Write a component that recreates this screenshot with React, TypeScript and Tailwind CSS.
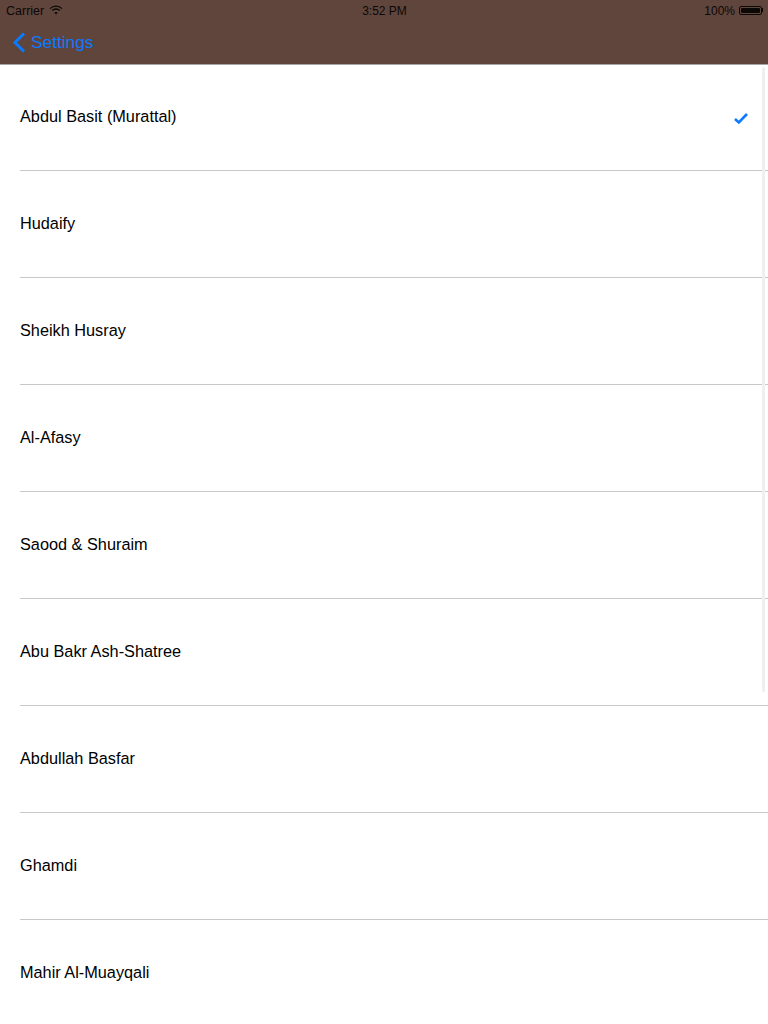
const names = [
  "Abdul Basit (Murattal)",
  "Hudaify",
  "Sheikh Husray",
  "Al-Afasy",
  "Saood & Shuraim",
  "Abu Bakr Ash-Shatree",
  "Abdullah Basfar",
  "Ghamdi",
  "Mahir Al-Muayqali",
];

export default function App() {
  return (
    <div className="relative h-[1024px] w-[768px] overflow-hidden bg-white font-['Liberation_Sans',Arial,sans-serif] text-black">
      <header className="h-[65px] border-b border-[#a9a5a3] bg-[#60453d]">
        <div className="flex h-[20px] items-center justify-between pt-[2px] pl-[6px] pr-[5px] text-[12px] text-[#0c0806]">
          <div className="flex w-[200px] items-center gap-[5px]">
            <span className="text-[12.5px]">Carrier</span>
            <svg width="14" height="10" viewBox="0 0 14 10" fill="none" stroke="#0c0806" className="-mt-[2px]">
              <path d="M1 3.6C4.4 .4 9.6 .4 13 3.6" strokeWidth="1.3" />
              <path d="M3.2 5.6C5.4 3.7 8.6 3.7 10.8 5.6" strokeWidth="1.3" />
              <path d="M7 9.6 5.2 7.6C6.2 6.8 7.8 6.8 8.8 7.6Z" fill="#0c0806" stroke="none" />
            </svg>
          </div>
          <span>3:52 PM</span>
          <div className="flex w-[200px] items-center justify-end gap-[4px]">
            <span>100%</span>
            <div className="-mt-[2px] flex items-center">
              <div className="h-[9px] w-[23px] rounded-[2px] border border-[#0c0806] p-px">
                <div className="h-full w-full rounded-[1px] bg-[#0c0806]" />
              </div>
              <div className="h-[4px] w-px bg-[#0c0806]" />
            </div>
          </div>
        </div>
        <div className="flex h-[44px] items-center pl-[12px] text-[17.3px] text-[#0a7aff]">
          <svg width="14" height="21" viewBox="0 0 14 21" fill="none" stroke="#0a7aff" strokeWidth="3">
            <path d="M12 1.5 3 10.5l9 9" />
          </svg>
          <span className="ml-[5px] mt-[2px]">Settings</span>
        </div>
      </header>
      <ul className="pl-[20px] text-[16.3px]">
        {names.map((n, i) => (
          <li
            key={n}
            className={`flex items-center justify-between border-b border-[#c8c7cc] ${i === 0 ? "h-[106px]" : "h-[107px]"}`}
          >
            <span className="mb-[2px]">{n}</span>
            {i === 0 && (
              <svg width="14" height="11" viewBox="0 0 14 11" fill="none" stroke="#0a7aff" strokeWidth="2.6" className="mr-[20px] mt-[1px]">
                <path d="M1 6 4.8 9.4 13 1" />
              </svg>
            )}
          </li>
        ))}
      </ul>
      <div className="absolute left-[762px] top-[67px] h-[625px] w-[3px] rounded-full bg-[#efefef]" />
    </div>
  );
}
